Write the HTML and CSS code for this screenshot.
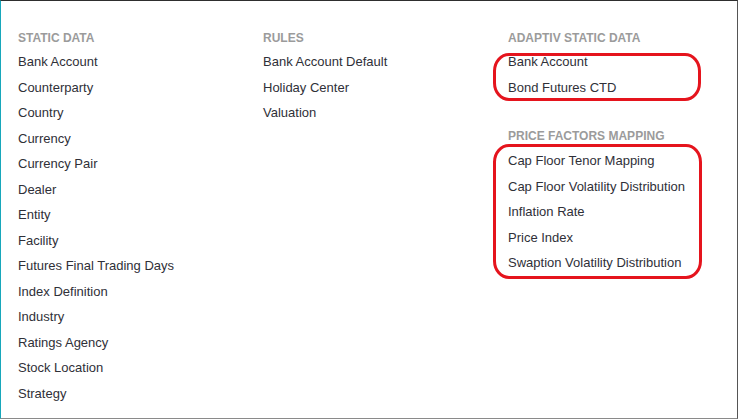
FILE: index.html
```html
<!DOCTYPE html>
<html lang="en">
<head>
<meta charset="utf-8">
<title>Static Data</title>
<link rel="stylesheet" href="styles.css">
</head>
<body>
<div class="panel">
  <div class="columns">
    <div class="col">
      <section class="group">
        <h3 class="group-title">STATIC DATA</h3>
        <ul class="links">
          <li>Bank Account</li>
          <li>Counterparty</li>
          <li>Country</li>
          <li>Currency</li>
          <li>Currency Pair</li>
          <li>Dealer</li>
          <li>Entity</li>
          <li>Facility</li>
          <li>Futures Final Trading Days</li>
          <li>Index Definition</li>
          <li>Industry</li>
          <li>Ratings Agency</li>
          <li>Stock Location</li>
          <li>Strategy</li>
        </ul>
      </section>
    </div>
    <div class="col">
      <section class="group">
        <h3 class="group-title">RULES</h3>
        <ul class="links">
          <li>Bank Account Default</li>
          <li>Holiday Center</li>
          <li>Valuation</li>
        </ul>
      </section>
    </div>
    <div class="col">
      <section class="group">
        <h3 class="group-title">ADAPTIV STATIC DATA</h3>
        <ul class="links marked marked-a">
          <li>Bank Account</li>
          <li>Bond Futures CTD</li>
        </ul>
      </section>
      <section class="group group-next">
        <h3 class="group-title">PRICE FACTORS MAPPING</h3>
        <ul class="links marked marked-b">
          <li>Cap Floor Tenor Mapping</li>
          <li>Cap Floor Volatility Distribution</li>
          <li>Inflation Rate</li>
          <li>Price Index</li>
          <li>Swaption Volatility Distribution</li>
        </ul>
      </section>
    </div>
  </div>
</div>
</body>
</html>
```
FILE: styles.css
```css
html, body {
  margin: 0;
  padding: 0;
  background: #ffffff;
}

.panel {
  box-sizing: border-box;
  width: 738px;
  height: 419px;
  border-top: 1px solid #2e2e2e;
  border-left: 1px solid #17a7bb;
  border-right: 1px solid #555555;
  border-bottom: 1px solid #8a8a8a;
  padding: 29px 0 0 17px;
  font-family: "Liberation Sans", Arial, sans-serif;
  color: #333333;
}

.columns {
  display: grid;
  grid-template-columns: 245px 245px 245px;
}

.group-title {
  margin: 0 0 3px 0;
  font-size: 12px;
  line-height: 16px;
  font-weight: bold;
  color: #9b9b9b;
  letter-spacing: 0;
}

.group-next {
  margin-top: 28px;
}

.group-next .group-title {
  margin-bottom: 4px;
}

.links {
  list-style: none;
  margin: 0;
  padding: 0;
}

.links li {
  font-size: 13px;
  line-height: 25.5px;
  height: 25.5px;
  white-space: nowrap;
  color: #2f3038;
}

.marked {
  position: relative;
}

.marked::after {
  content: "";
  position: absolute;
  left: -15px;
  border: 3px solid #e5141d;
  box-sizing: border-box;
  pointer-events: none;
}

.marked-a::after {
  top: 4px;
  bottom: -1px;
  width: 208px;
  border-radius: 16px / 18px;
}

.marked-b::after {
  top: -4px;
  bottom: -3px;
  width: 209px;
  border-radius: 16px / 18px;
}
```
